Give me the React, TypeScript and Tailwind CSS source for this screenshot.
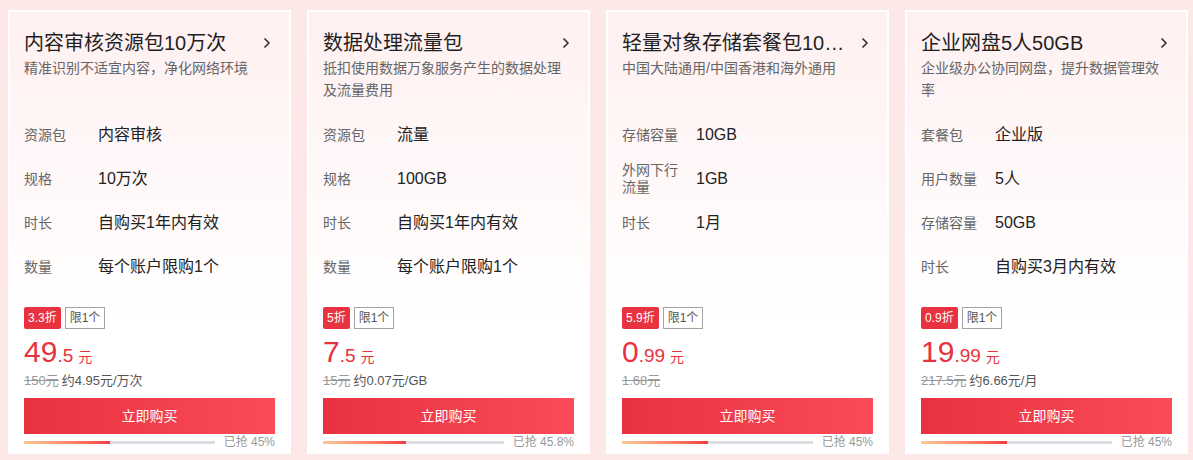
import { ChevronRight } from "lucide-react";

interface Spec {
  label: string;
  value: string;
}

interface Pack {
  title: string;
  desc: string;
  specs: Spec[];
  discount: string;
  priceInt: string;
  priceDec: string;
  origin: string;
  unit?: string;
  sold: number;
  soldText: string;
}

const PACKS: Pack[] = [
  {
    title: "内容审核资源包10万次",
    desc: "精准识别不适宜内容，净化网络环境",
    specs: [
      { label: "资源包", value: "内容审核" },
      { label: "规格", value: "10万次" },
      { label: "时长", value: "自购买1年内有效" },
      { label: "数量", value: "每个账户限购1个" },
    ],
    discount: "3.3折",
    priceInt: "49",
    priceDec: ".5",
    origin: "150元",
    unit: "约4.95元/万次",
    sold: 45,
    soldText: "已抢 45%",
  },
  {
    title: "数据处理流量包",
    desc: "抵扣使用数据万象服务产生的数据处理及流量费用",
    specs: [
      { label: "资源包", value: "流量" },
      { label: "规格", value: "100GB" },
      { label: "时长", value: "自购买1年内有效" },
      { label: "数量", value: "每个账户限购1个" },
    ],
    discount: "5折",
    priceInt: "7",
    priceDec: ".5",
    origin: "15元",
    unit: "约0.07元/GB",
    sold: 45.8,
    soldText: "已抢 45.8%",
  },
  {
    title: "轻量对象存储套餐包10GB",
    desc: "中国大陆通用/中国香港和海外通用",
    specs: [
      { label: "存储容量", value: "10GB" },
      { label: "外网下行流量", value: "1GB" },
      { label: "时长", value: "1月" },
    ],
    discount: "5.9折",
    priceInt: "0",
    priceDec: ".99",
    origin: "1.68元",
    sold: 45,
    soldText: "已抢 45%",
  },
  {
    title: "企业网盘5人50GB",
    desc: "企业级办公协同网盘，提升数据管理效率",
    specs: [
      { label: "套餐包", value: "企业版" },
      { label: "用户数量", value: "5人" },
      { label: "存储容量", value: "50GB" },
      { label: "时长", value: "自购买3月内有效" },
    ],
    discount: "0.9折",
    priceInt: "19",
    priceDec: ".99",
    origin: "217.5元",
    unit: "约6.66元/月",
    sold: 45,
    soldText: "已抢 45%",
  },
];

function PackCard({ p }: { p: Pack }) {
  return (
    <div className="flex flex-col border-2 border-white bg-linear-to-b from-[#fff0f1] to-white to-70% px-[14px] pt-[17px] pb-[2px]">
      {/* 标题 */}
      <div className="h-[84px]">
        <div className="flex h-[28px] items-center gap-2">
          <span className="min-w-0 flex-1 truncate text-[20px] text-[#1f1f1f]">{p.title}</span>
          <ChevronRight size={16} strokeWidth={2.6} className="shrink-0 text-[#333]" />
        </div>
        <p className="text-[14px] leading-[22px] text-[#666]">{p.desc}</p>
      </div>

      {/* 规格 */}
      <div className="h-[176px]">
        {p.specs.map((s) => (
          <div key={s.label} className="flex h-[44px] items-center">
            <span className="mr-[14px] w-[60px] shrink-0 text-[14px] leading-[17px] text-[#666]">{s.label}</span>
            <span className="text-[16px] text-[#222]">{s.value}</span>
          </div>
        ))}
      </div>

      {/* 标签 */}
      <div className="mt-[18px] flex h-[22px] gap-[4px] text-[12px]">
        <span className="flex items-center rounded-[2px] bg-[#e8323f] px-[4px] text-white">{p.discount}</span>
        <span className="flex items-center border border-[#a3a3a3] px-[4px] text-[#555]">限1个</span>
      </div>

      {/* 价格 */}
      <div className="mt-[5px] h-[36px] leading-[36px] text-[#e8323f]">
        <span className="text-[30px]">{p.priceInt}</span>
        <span className="text-[19px]">{p.priceDec}</span>
        <span className="ml-[5px] text-[14px]">元</span>
      </div>
      <div className="mt-[1px] flex h-[20px] items-center gap-[3px] text-[13px]">
        <span className="text-[#999] line-through">{p.origin}</span>
        {p.unit && <span className="text-[#555]">{p.unit}</span>}
      </div>

      <button className="mt-[7px] h-[36px] w-full shrink-0 bg-linear-to-r from-[#e8323f] to-[#fb4a58] text-[14px] text-white">
        立即购买
      </button>

      {/* 进度 */}
      <div className="flex h-[16px] items-center gap-[9px]">
        <div className="h-[3px] flex-1 bg-[#dcdde2]">
          <div
            className="h-full bg-linear-to-r from-[#fcc897] to-[#ef3a42]"
            style={{ width: `${p.sold}%` }}
          />
        </div>
        <span className="text-[12px] leading-[16px] text-[#999]">{p.soldText}</span>
      </div>
    </div>
  );
}

export default function App() {
  return (
    <div
      className="min-h-screen bg-[#fce9e7] pt-[10px] pr-[5px] pl-[8px]"
      style={{ fontFamily: '"Liberation Sans", "Noto Sans CJK SC", sans-serif' }}
    >
      <div className="grid grid-cols-4 gap-4">
        {PACKS.map((p) => (
          <PackCard key={p.title} p={p} />
        ))}
      </div>
    </div>
  );
}
